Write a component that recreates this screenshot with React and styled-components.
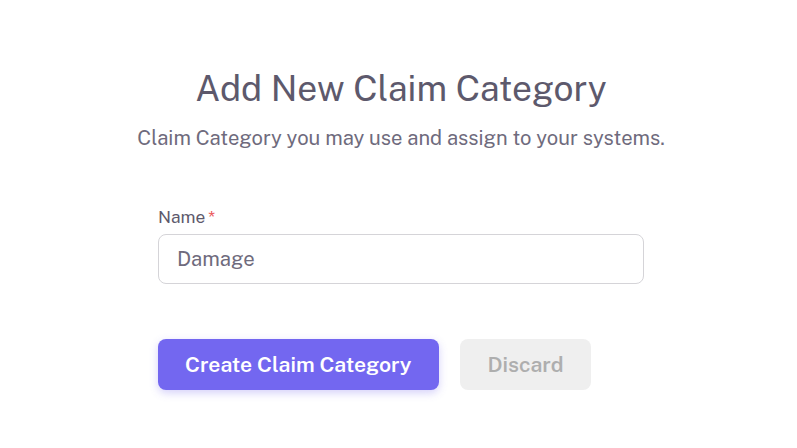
import React from "react";
import styled, { createGlobalStyle } from "styled-components";

const Global = createGlobalStyle`
  html, body { margin: 0; padding: 0; background: #ffffff; }
  body { font-family: "Public Sans", Inter, "Noto Sans", sans-serif; }
  * { box-sizing: border-box; }
`;

const Page = styled.div`
  width: 797px;
  height: 448px;
  display: flex;
  flex-direction: column;
  align-items: center;
  padding-top: 64px;
  padding-left: 5px;
`;

const Title = styled.h1`
  margin: 0;
  font-size: 35.4px;
  font-weight: 400;
  line-height: 48px;
  color: #5d596c;
`;

const Subtitle = styled.p`
  margin: 12px 0 0;
  font-size: 20.2px;
  line-height: 28px;
  color: #6f6b7d;
`;

const Form = styled.form`
  width: 486px;
  margin-top: 54px;
  display: flex;
  flex-direction: column;
`;

const Label = styled.label`
  font-size: 17.3px;
  line-height: 22px;
  color: #5d596c;
  margin-bottom: 6px;
  margin-left: 0;
`;

const Req = styled.span`
  color: #ea5455;
  margin-left: 3px;
`;

const Input = styled.input`
  height: 50px;
  border: 1px solid #d5d4d8;
  border-radius: 8px;
  padding: 0 18px;
  font-family: inherit;
  font-size: 20.3px;
  color: #6f6b7d;
  outline: none;
`;

const Actions = styled.div`
  margin-top: 55px;
  display: flex;
  gap: 21px;
`;

const Button = styled.button`
  height: 51px;
  border: none;
  border-radius: 8px;
  font-family: inherit;
  font-size: 21.2px;
  font-weight: 600;
  padding: 0 ${(p) => (p.$primary ? "27px" : "28px")};
  background: ${(p) => (p.$primary ? "#7367f0" : "#efefef")};
  color: ${(p) => (p.$primary ? "#ffffff" : "#aeaeae")};
  box-shadow: ${(p) => (p.$primary ? "0 3px 8px rgba(115,103,240,0.3)" : "none")};
`;

export default function App() {
  return (
    <>
      <Global />
      <Page>
        <Title>Add New Claim Category</Title>
        <Subtitle>Claim Category you may use and assign to your systems.</Subtitle>
        <Form onSubmit={(e) => e.preventDefault()}>
          <Label>
            Name<Req>*</Req>
          </Label>
          <Input defaultValue="Damage" />
          <Actions>
            <Button type="submit" $primary>Create Claim Category</Button>
            <Button type="button">Discard</Button>
          </Actions>
        </Form>
      </Page>
    </>
  );
}
